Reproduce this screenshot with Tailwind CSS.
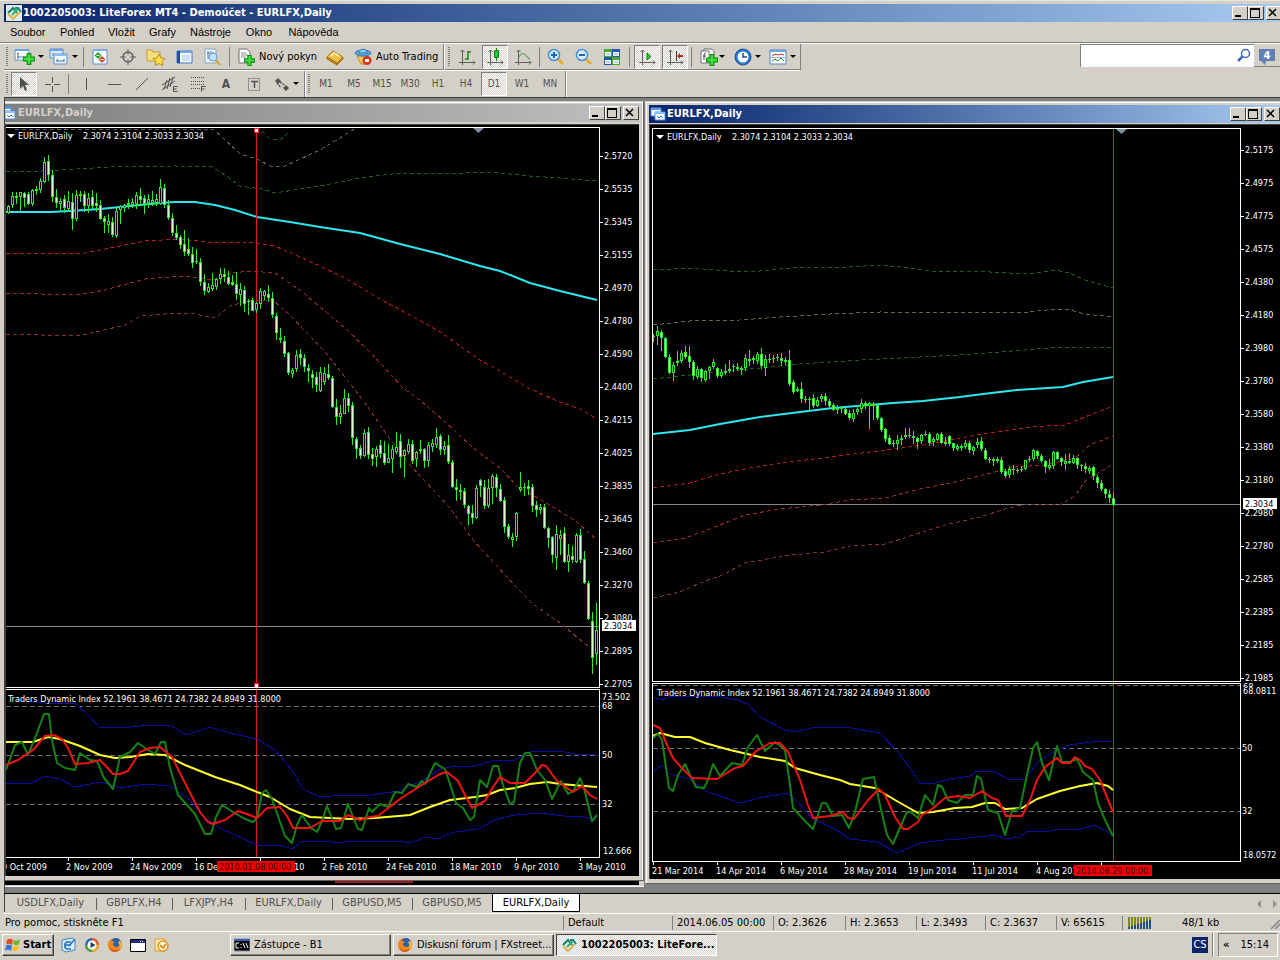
<!DOCTYPE html>
<html lang="cs">
<head>
<meta charset="utf-8">
<title>1002205003: LiteForex MT4 - Demoúčet - EURLFX,Daily</title>
<script src="https://cdn.jsdelivr.net/npm/@tailwindcss/browser@4"></script>
</head>
<body class="h-screen overflow-hidden flex flex-col bg-[#d4d0c8] text-black text-[11px] leading-4 font-['DejaVu_Sans_Condensed','DejaVu_Sans',sans-serif] select-none">

<!-- shared symbols -->
<svg class="hidden" aria-hidden="true">
  <symbol id="logo" viewBox="0 0 16 16"><rect width="16" height="16" fill="#dfeaf0"/><path d="M2 8l5-5 4 5" fill="none" stroke="#14805a" stroke-width="2"/><path d="M9 3h3l3 4" fill="none" stroke="#167f80" stroke-width="2"/><path d="M2 9l5 5 7-7" fill="none" stroke="#e3b445" stroke-width="2"/><path d="M6 10l6-6" stroke="#30b070" stroke-width="2"/></symbol>
  <symbol id="charticon" viewBox="0 0 16 16"><path d="M1 2h10v8H1z" fill="#fff" stroke="#4f8fe0"/><path d="M1 2h10v2H1z" fill="#5b9bef"/><path d="M5 6h10v8H5z" fill="#fff" stroke="#4f8fe0"/><path d="M5 6h10v2H5z" fill="#8cc0ff"/><path d="M7 10l2 2 2-2 2 2" fill="none" stroke="#3474c8"/></symbol>
  <symbol id="min" viewBox="0 0 12 10"><path d="M2 7h6v2H2z"/></symbol>
  <symbol id="max" viewBox="0 0 12 10"><path d="M1 0h10v10H1zM2 2v7h8V2z" fill-rule="evenodd"/></symbol>
  <symbol id="close" viewBox="0 0 12 10"><path d="M2 1l7 7M9 1l-7 7" stroke="#000" stroke-width="1.500"/></symbol>
  <symbol id="arrow" viewBox="0 0 6 4"><path d="M0 0h6L3 3z"/></symbol>
  <symbol id="axes" viewBox="0 0 18 18"><path d="M4.500 2v15M1 14.500h16M2.500 4l2-2 2 2M15 12.500l2 2-2 2" fill="none" stroke="#606060"/></symbol>
  <symbol id="plus" viewBox="0 0 10 10"><path d="M3 0h4v3h3v4H7v3H3V7H0V3h3z" fill="#109410"/><path d="M4 1h2v3h3v2H6v3H4V6H1V4h3z" fill="#3fe03f"/></symbol>
  <symbol id="firefox" viewBox="0 0 16 16"><circle cx="8" cy="8" r="7" fill="#e8781c"/><circle cx="9" cy="6" r="5" fill="#2b62b0"/><path d="M1 6c1-1 2-3 3-4 0 2 2 2 4 3-2 1-3 2-1 4 2 2 5 1 6-2 0 5-3 8-6 8S1 12 1 6z" fill="#f08a1e"/><path d="M13 4c2 3 2 7-1 9 1-3 1-6-1-8z" fill="#fbc531"/><path d="M2 9c2 5 8 6 11 2-1 4-9 6-11-2z" fill="#c8401a"/></symbol>
</svg>

<!-- title bar -->
<header class="shrink-0 border-t border-[#e8e5df] pt-[3px] pl-1">
  <div class="flex items-center h-[18px] pl-0.5 bg-linear-to-r from-[#0a246a] to-[#a6caf0] text-white font-bold">
    <svg class="w-4 h-4 shrink-0"><use href="#logo"/></svg>
    <h1 class="ml-px grow whitespace-nowrap">1002205003: LiteForex MT4 - Demoúčet - EURLFX,Daily</h1>
    <div class="flex shrink-0 -mr-0.5">
      <button aria-label="Minimalizovat" class="w-4 h-[14px] bg-[#d4d0c8] border border-t-white border-l-white border-r-[#404040] border-b-[#404040]"><svg class="w-3 h-[10px]"><use href="#min"/></svg></button>
      <button aria-label="Maximalizovat" class="w-4 h-[14px] bg-[#d4d0c8] border border-t-white border-l-white border-r-[#404040] border-b-[#404040]"><svg class="w-3 h-[10px]"><use href="#max"/></svg></button>
      <button aria-label="Zavřít" class="ml-0.5 w-4 h-[14px] bg-[#d4d0c8] border border-t-white border-l-white border-r-[#404040] border-b-[#404040]"><svg class="w-3 h-[10px]"><use href="#close"/></svg></button>
    </div>
  </div>
</header>

<!-- menu -->
<nav class="shrink-0 flex items-center gap-[15px] h-[21px] pl-[10px] border-b border-[#808080] font-['Liberation_Sans','DejaVu_Sans',sans-serif]">
  <button class="w-[35px]">Soubor</button><button class="w-[33px]">Pohled</button><button class="w-[26px]">Vložit</button><button class="w-[26px]">Grafy</button><button class="w-[40px]">Nástroje</button><button class="w-[28px]">Okno</button><button class="w-[51px]">Nápověda</button>
</nav>

<div class="shrink-0 flex justify-between border-t border-white h-[54px] pl-1">
 <div>
  <!-- standard toolbar -->
  <div class="flex items-center h-[27px] border-b border-white shadow-[0_-1px_0_#808080_inset] border-r border-r-[#808080] w-[797px]">
    <span class="w-[6px] h-5 shrink-0 bg-[repeating-linear-gradient(#808080_0_1px,#d4d0c8_1px_2px)] border-x-2 border-[#d4d0c8]"></span>
    <button aria-label="Nový graf" class="w-9 shrink-0 flex items-center gap-0.5 pl-1"><svg class="w-[22px] h-[18px]" viewBox="0 0 22 18"><path d="M1 2h14v10H1z" fill="#fff" stroke="#5b8fd0"/><path d="M1 1h14v2H1z" fill="#6aa4e8"/><path d="M4 5v6M3 9h9M3 6l1-1 1 1" fill="none" stroke="#507090"/><use href="#plus" x="9" y="5" width="12" height="12"/></svg><svg class="w-[6px] h-1 shrink-0"><use href="#arrow"/></svg></button>
    <button aria-label="Profily" class="w-9 shrink-0 flex items-center gap-0.5 pl-0.5"><svg class="w-[22px] h-[18px]" viewBox="0 0 22 18"><path d="M2 1h13v9H2z" fill="#dcebfb" stroke="#5b8fd0"/><path d="M2 1h13v2H2z" fill="#6aa4e8"/><path d="M5 5v3" stroke="#507090"/><path d="M6 6h13v10H6z" fill="#eef6ff" stroke="#5b8fd0"/><path d="M6 6h13v2H6z" fill="#8cbcf4"/><path d="M9 13h7M9 11v3M16 11v3" stroke="#507090"/></svg><svg class="w-[6px] h-1 shrink-0"><use href="#arrow"/></svg></button>
    <span class="mx-px w-0.5 h-5 border-l border-[#808080] shrink-0"></span>
    <button aria-label="Přehled trhu" class="w-7 shrink-0 flex justify-center"><svg class="w-[18px] h-[18px]" viewBox="0 0 18 18"><path d="M2 2h14v14H2z" fill="#fff" stroke="#5590d0"/><path d="M2 1h14v2H2z" fill="#77b0ec"/><path d="M7 4l3.500 3.500L7 11 3.500 7.500z" fill="#22a522"/><path d="M11 8l3.500 3.500L11 15l-3.500-3.500z" fill="#e2442c"/><path d="M5.500 7.500h3M9.500 11.500h3" stroke="#fff"/></svg></button>
    <button aria-label="Datové okno" class="w-7 shrink-0 flex justify-center"><svg class="w-[18px] h-[18px]" viewBox="0 0 18 18"><circle cx="9" cy="9" r="5" fill="none" stroke="#606060" stroke-width="1.500"/><path d="M9 1v6M9 11v6M1 9h6M11 9h6" stroke="#606060"/></svg></button>
    <button aria-label="Navigátor" class="w-7 shrink-0 flex justify-center"><svg class="w-[20px] h-[18px]" viewBox="0 0 20 18"><path d="M1 2h5l1 2h7v9H1z" fill="#f6df83" stroke="#c49a2a"/><path d="M13 6l2 4 4 .5-3 3 .8 4L13 15.500l-4 2 1-4-3-3 4-.5z" fill="#ffe14a" stroke="#bb8a1d"/></svg></button>
    <button aria-label="Terminál" class="w-7 shrink-0 flex justify-center"><svg class="w-[18px] h-[18px]" viewBox="0 0 18 18"><path d="M2 3h15v12H2z" fill="#f4f9ff" stroke="#3e7ac6"/><path d="M2 3h3v12H2z" fill="#1e4e9c"/><path d="M5 3h12v2H5z" fill="#6ca6ea"/><path d="M7 8h8M7 10h8M7 12h8" stroke="#a8c6e8"/></svg></button>
    <button aria-label="Tester strategií" class="w-7 shrink-0 flex justify-center"><svg class="w-[18px] h-[18px]" viewBox="0 0 18 18"><path d="M2 1h11v14H2z" fill="#eef5fc" stroke="#8ba5c2"/><path d="M5 3v8M4 5h3M8 3v5M10 4v5" stroke="#5c7890"/><circle cx="10" cy="9" r="4" fill="#c5e4fb" stroke="#5b9bd8"/><path d="M13 12l4 5" stroke="#d9a12c" stroke-width="2"/></svg></button>
    <span class="mx-[3px] w-0.5 h-5 border-l border-[#808080] shrink-0"></span>
    <button class="w-[87px] shrink-0 flex items-center gap-1 pl-[3px] whitespace-nowrap"><svg class="w-[18px] h-[18px] shrink-0" viewBox="0 0 18 18"><path d="M2 1h8l3 3v11H2z" fill="#fff" stroke="#707070"/><path d="M4 5h5M4 7h7M4 9h5" stroke="#909090"/><use href="#plus" x="7" y="7" width="11" height="11"/></svg>Nový pokyn</button>
    <button aria-label="MetaEditor" class="w-7 shrink-0 flex justify-center"><svg class="w-[18px] h-[18px]" viewBox="0 0 18 18"><path d="M1 9l6-6 10 6-6 6z" fill="#f0c04a" stroke="#a87412"/><path d="M1 9v2l10 6v-2zM11 15l6-6v2l-6 6z" fill="#c58b22" stroke="#a87412"/><path d="M5 8l3-3 5 3" fill="none" stroke="#ffe9a0" stroke-width="2"/></svg></button>
    <button class="w-[94px] shrink-0 flex items-center gap-1 pl-[5px] whitespace-nowrap"><svg class="w-[18px] h-[18px] shrink-0" viewBox="0 0 18 18"><path d="M3 8h11l-2 8H7z" fill="#f3c85c" stroke="#b98a24"/><ellipse cx="9" cy="5" rx="8" ry="3" fill="#5aa6dc" stroke="#2d78b4"/><path d="M5 5c0-5 8-5 8 0z" fill="#8fcdf2" stroke="#2d78b4"/><circle cx="13" cy="12.500" r="4.500" fill="#dc3318"/><path d="M11 11h4v3h-4z" fill="#fff"/></svg>Auto Trading</button>
    <span class="h-[26px] w-0.5 bg-white border-l border-[#808080] shrink-0"></span>
    <span class="mx-px w-[6px] h-5 shrink-0 bg-[repeating-linear-gradient(#808080_0_1px,#d4d0c8_1px_2px)] border-x-2 border-[#d4d0c8]"></span>
    <button aria-label="Sloupcový graf" class="w-7 shrink-0 flex justify-center"><svg class="w-[18px] h-[18px]" viewBox="0 0 18 18"><use href="#axes"/><path d="M10 3v9M10 4h3M7 11h3" stroke="#188a18" stroke-width="1.500"/></svg></button>
    <button aria-label="Svíčkový graf" class="w-[26px] h-6 mx-px shrink-0 flex items-center justify-center border border-t-[#808080] border-l-[#808080] border-r-white border-b-white bg-[repeating-conic-gradient(#fff_0_25%,#d4d0c8_0_50%)] bg-[length:2px_2px]"><svg class="w-[18px] h-[18px]" viewBox="0 0 18 18"><use href="#axes"/><path d="M10.500 0v13" stroke="#108010"/><path d="M8.500 2.500h4v7h-4z" fill="#28c83c" stroke="#108010"/></svg></button>
    <button aria-label="Čárový graf" class="w-7 shrink-0 flex justify-center"><svg class="w-[18px] h-[18px]" viewBox="0 0 18 18"><use href="#axes"/><path d="M4 11c3-7 6-7 9-2l3 2" fill="none" stroke="#309030"/></svg></button>
    <span class="mx-[2px] w-px h-5 bg-[#808080] shrink-0"></span>
    <button aria-label="Přiblížit" class="w-7 shrink-0 flex justify-center"><svg class="w-[18px] h-[18px]" viewBox="0 0 18 18"><path d="M11 11l5 5" stroke="#e0b030" stroke-width="3"/><circle cx="7" cy="7" r="5.500" fill="#d5edfc" stroke="#4a90d0" stroke-width="1.500"/><path d="M4 7h6M7 4v6" stroke="#1c62b8" stroke-width="2"/></svg></button>
    <button aria-label="Oddálit" class="w-7 shrink-0 flex justify-center"><svg class="w-[18px] h-[18px]" viewBox="0 0 18 18"><path d="M11 11l5 5" stroke="#e0b030" stroke-width="3"/><circle cx="7" cy="7" r="5.500" fill="#d5edfc" stroke="#4a90d0" stroke-width="1.500"/><path d="M4 7h6" stroke="#1c62b8" stroke-width="2"/></svg></button>
    <button aria-label="Dlaždice" class="w-7 shrink-0 flex justify-center"><svg class="w-[18px] h-[18px]" viewBox="0 0 18 18"><path d="M1 1h8v8H1zM9 9h8v8H9z" fill="#48a830"/><path d="M9 1h8v8H9zM1 9h8v8H1z" fill="#2857b0"/><path d="M2 4h6v4H2zM10 4h6v4h-6zM2 12h6v4H2zM10 12h6v4h-6z" fill="#e8f3ff"/><path d="M3 6h4M11 6h4M3 14h4M11 14h4" stroke="#9ab8dc"/></svg></button>
    <span class="mx-[3px] w-px h-5 bg-[#808080] shrink-0"></span>
    <button aria-label="Automatický posun" class="w-[26px] h-6 mx-px shrink-0 flex items-center justify-center border border-t-[#808080] border-l-[#808080] border-r-white border-b-white bg-[repeating-conic-gradient(#fff_0_25%,#d4d0c8_0_50%)] bg-[length:2px_2px]"><svg class="w-[18px] h-[18px]" viewBox="0 0 18 18"><use href="#axes"/><path d="M9 5v7l4-3.500z" fill="#36c836" stroke="#108010"/></svg></button>
    <button aria-label="Posun grafu" class="w-[26px] h-6 mx-px shrink-0 flex items-center justify-center border border-t-[#808080] border-l-[#808080] border-r-white border-b-white bg-[repeating-conic-gradient(#fff_0_25%,#d4d0c8_0_50%)] bg-[length:2px_2px]"><svg class="w-[18px] h-[18px]" viewBox="0 0 18 18"><use href="#axes"/><path d="M10.500 3v10" stroke="#404040"/><path d="M11 8l3-3v2h3v2h-3v2z" fill="#b03020"/></svg></button>
    <span class="mx-[2px] w-px h-5 bg-[#808080] shrink-0"></span>
    <button aria-label="Indikátory" class="w-[35px] shrink-0 flex items-center gap-px pl-[6px]"><svg class="w-[18px] h-[18px] shrink-0" viewBox="0 0 18 18"><path d="M4 1h8l2 2v9H4z" fill="#fff" stroke="#707070"/><path d="M1 3h8v12H1z" fill="#fff" stroke="#707070"/><path d="M6 5c-2 0-2 1-2 7M3 8h3" fill="none" stroke="#404040"/><use href="#plus" x="6" y="6" width="12" height="12"/></svg><svg class="w-[6px] h-1 shrink-0"><use href="#arrow"/></svg></button>
    <button aria-label="Časové rámce" class="w-[35px] shrink-0 flex items-center gap-[3px] pl-[5px]"><svg class="w-[18px] h-[18px] shrink-0" viewBox="0 0 18 18"><circle cx="9" cy="9" r="8" fill="#2d79cc" stroke="#1b4f96"/><circle cx="9" cy="9" r="5.500" fill="#f4faff"/><path d="M9 5v4h4" fill="none" stroke="#2a4d80" stroke-width="1.500"/></svg><svg class="w-[6px] h-1 shrink-0"><use href="#arrow"/></svg></button>
    <button aria-label="Šablony" class="w-[34px] shrink-0 flex items-center gap-[3px] pl-[5px]"><svg class="w-[18px] h-[18px] shrink-0" viewBox="0 0 18 18"><path d="M1 2h16v14H1z" fill="#fff" stroke="#4a86cc"/><path d="M1 2h16v2H1z" fill="#6aa4e8"/><path d="M3 8l3-2 3 1 3-1 3 1" fill="none" stroke="#b03030"/><path d="M3 13l3-2 3 2 3-3 3 3" fill="none" stroke="#208030"/><path d="M1 9.500h16" stroke="#90b4dc"/></svg><svg class="w-[6px] h-1 shrink-0"><use href="#arrow"/></svg></button>
  </div>

  <!-- drawing and period toolbar -->
  <div class="flex items-center h-[26px] w-[563px] border-r border-white shadow-[-1px_0_0_#808080_inset] text-[#505050]">
    <span class="w-[6px] h-5 shrink-0 bg-[repeating-linear-gradient(#808080_0_1px,#d4d0c8_1px_2px)] border-x-2 border-[#d4d0c8]"></span>
    <button aria-label="Kurzor" class="w-[26px] h-6 mx-px shrink-0 flex items-center justify-center border border-t-[#808080] border-l-[#808080] border-r-white border-b-white bg-[repeating-conic-gradient(#fff_0_25%,#d4d0c8_0_50%)] bg-[length:2px_2px]"><svg class="w-[18px] h-[18px]" viewBox="0 0 18 18"><path d="M5 2v12l3-3 2 5 2-1-2-5h4z" fill="#505050"/></svg></button>
    <button aria-label="Zaměřovač" class="w-7 shrink-0 flex justify-center"><svg class="w-[18px] h-[18px]" viewBox="0 0 18 18"><path d="M9.500 2v6M9.500 11v6M2 9.500h6M11 9.500h6" stroke="#505050"/></svg></button>
    <span class="mx-[2px] w-0.5 h-5 border-l border-[#808080] shrink-0"></span>
    <button aria-label="Svislá čára" class="w-7 shrink-0 flex justify-center"><svg class="w-[18px] h-[18px]" viewBox="0 0 18 18"><path d="M9.500 3v12" stroke="#505050"/></svg></button>
    <button aria-label="Vodorovná čára" class="w-7 shrink-0 flex justify-center"><svg class="w-[18px] h-[18px]" viewBox="0 0 18 18"><path d="M3 9.500h13" stroke="#505050"/></svg></button>
    <button aria-label="Trendová čára" class="w-7 shrink-0 flex justify-center"><svg class="w-[18px] h-[18px]" viewBox="0 0 18 18"><path d="M3 15L15 3" stroke="#505050"/></svg></button>
    <button aria-label="Kanál" class="w-7 shrink-0 flex justify-center"><svg class="w-[18px] h-[18px]" viewBox="0 0 18 18"><path d="M1 10L14 2M1 15L14 6M3 14L6 5M6 14l3-11M9 12l3-10" stroke="#505050"/><path d="M16.500 11.500h-4v5h4M12.500 14h3" fill="none" stroke="#505050"/></svg></button>
    <button aria-label="Fibonacci" class="w-7 shrink-0 flex justify-center"><svg class="w-[18px] h-[18px]" viewBox="0 0 18 18"><path d="M2 2.500h14M2 6.500h14M2 9.500h14M2 13.500h9" stroke="#505050" stroke-dasharray="1 1"/><path d="M16.500 11.500h-4v5M12.500 14h3" fill="none" stroke="#505050"/></svg></button>
    <button aria-label="Text" class="w-7 shrink-0 text-center text-[12px] font-bold">A</button>
    <button aria-label="Textový štítek" class="w-7 shrink-0 flex justify-center"><svg class="w-[18px] h-[18px]" viewBox="0 0 18 18"><path d="M3.500 3.500h11v12h-11z" fill="none" stroke="#505050" stroke-dasharray="1 1"/><path d="M6 6.500h7M9.500 6v7" stroke="#505050" stroke-width="1.500"/></svg></button>
    <button aria-label="Šipky" class="w-9 shrink-0 flex items-center gap-0.5 pl-[5px]"><svg class="w-[18px] h-[18px] shrink-0" viewBox="0 0 18 18"><path d="M2 6l3-3 3 3-3 3zM10 13l3-3 3 3-3 3z" fill="#505050"/><path d="M4 8l4 5M7 7l5 3" stroke="#505050" stroke-width="1.500" stroke-dasharray="2 1"/></svg><svg class="w-[6px] h-1 shrink-0"><use href="#arrow"/></svg></button>
    <span class="h-[26px] w-0.5 bg-white border-l border-[#808080] shrink-0"></span>
    <span class="w-[6px] h-5 shrink-0 bg-[repeating-linear-gradient(#808080_0_1px,#d4d0c8_1px_2px)] border-x-2 border-[#d4d0c8]"></span>
    <div class="flex items-center text-[10px]">
      <button class="w-7">M1</button><button class="w-7">M5</button><button class="w-7">M15</button><button class="w-7">M30</button><button class="w-7">H1</button><button class="w-7">H4</button>
      <button class="w-[26px] h-6 mx-px border border-t-[#808080] border-l-[#808080] border-r-white border-b-white bg-[repeating-conic-gradient(#fff_0_25%,#d4d0c8_0_50%)] bg-[length:2px_2px]">D1</button>
      <button class="w-7">W1</button><button class="w-7">MN</button>
    </div>
  </div>
 </div>
 <!-- search -->
 <div class="flex items-start">
   <label class="flex items-center bg-white border-t border-l border-[#808080] h-[23px] w-[174px]">
     <input type="text" aria-label="Hledat" class="w-[155px] h-5 outline-none px-1">
     <svg class="w-4 h-4" viewBox="0 0 16 16"><circle cx="9.500" cy="5.500" r="4" fill="#fff" stroke="#3f66b8" stroke-width="1.500"/><path d="M6.500 8.500L2 13" stroke="#3f66b8" stroke-width="2.500"/></svg>
   </label>
   <button aria-label="Zprávy: 4" class="w-[26px] h-[22px] mt-px flex items-center justify-center border-b border-[#808080]"><svg class="w-[18px] h-[18px]" viewBox="0 0 18 18"><path d="M1 2h16v12H8l-1 4-4-4H1z" fill="#6080b4"/><text x="9" y="12" text-anchor="middle" fill="#fff" class="text-[11px] font-bold">4</text></svg></button>
 </div>
</div>

<!-- document area -->
<main class="relative grow min-h-0 ml-1 border-t border-l border-[#404040] bg-[#808080] overflow-hidden">
  <!-- window behind -->
  <div class="absolute left-0 top-[3px] bottom-1 w-[639px] bg-[#d4d0c8] border-b-2 border-[#808080] shadow-[0_-1px_0_#fff_inset]">
    <div class="absolute bottom-0.5 left-0 w-[634px] h-2 bg-black"></div>
    <div class="absolute bottom-1 left-[330px] w-[78px] h-0.5 bg-[#a01818]"></div>
  </div>
  <!-- left chart window -->
  <section aria-label="EURLFX,Daily 2010" class="absolute left-0 top-[3px] bottom-3 w-[639px] flex flex-col bg-[#d4d0c8] border-t border-t-[#d4d0c8] border-r border-r-[#606060] border-b border-b-[#606060] shadow-[0_1px_0_#fff_inset,-1px_0_0_#f4f2ee_inset]">
    <div class="mt-0.5 mr-1 h-[18px] shrink-0 flex items-center bg-linear-to-r from-[#808080] to-[#c0c0c0] text-[#d4d0c8] font-bold">
      <span class="w-[11px] h-4 overflow-hidden flex justify-end"><svg class="w-4 h-4 shrink-0"><use href="#charticon"/></svg></span>
      <h2 class="ml-0.5 grow">EURLFX,Daily</h2>
      <button aria-label="Minimalizovat" class="w-4 h-[14px] bg-[#d4d0c8] border border-t-white border-l-white border-r-[#404040] border-b-[#404040]"><svg class="w-3 h-[10px]"><use href="#min"/></svg></button>
      <button aria-label="Maximalizovat" class="w-4 h-[14px] bg-[#d4d0c8] border border-t-white border-l-white border-r-[#404040] border-b-[#404040]"><svg class="w-3 h-[10px]"><use href="#max"/></svg></button>
      <button aria-label="Zavřít" class="ml-0.5 w-4 h-[14px] bg-[#d4d0c8] border border-t-white border-l-white border-r-[#404040] border-b-[#404040]"><svg class="w-3 h-[10px]"><use href="#close"/></svg></button>
    </div>
    <div class="mt-0.5 mr-1 mb-1 grow min-h-0 bg-black border-t border-l border-[#404040]">
      <svg class="block w-full h-full text-[9px]"><g id="chartA" transform="translate(-6 -125)"></g></svg>
    </div>
  </section>
  <!-- right chart window -->
  <section aria-label="EURLFX,Daily 2014" class="absolute left-[640px] right-0 top-[3px] bottom-[9px] flex flex-col bg-[#d4d0c8] border-l border-t border-[#d4d0c8] border-b border-b-[#606060] shadow-[1px_1px_0_#fff_inset]">
    <div class="mt-[3px] ml-[3px] h-[18px] shrink-0 flex items-center bg-linear-to-r from-[#0a246a] to-[#a6caf0] text-white font-bold">
      <svg class="w-4 h-4 shrink-0 ml-px"><use href="#charticon"/></svg>
      <h2 class="ml-px grow">EURLFX,Daily</h2>
      <button aria-label="Minimalizovat" class="w-4 h-[14px] bg-[#d4d0c8] border border-t-white border-l-white border-r-[#404040] border-b-[#404040]"><svg class="w-3 h-[10px]"><use href="#min"/></svg></button>
      <button aria-label="Maximalizovat" class="w-4 h-[14px] bg-[#d4d0c8] border border-t-white border-l-white border-r-[#404040] border-b-[#404040]"><svg class="w-3 h-[10px]"><use href="#max"/></svg></button>
      <button aria-label="Zavřít" class="ml-0.5 w-4 h-[14px] bg-[#d4d0c8] border border-t-white border-l-white border-r-[#404040] border-b-[#404040]"><svg class="w-3 h-[10px]"><use href="#close"/></svg></button>
    </div>
    <div class="mt-px ml-[3px] mb-1 grow min-h-0 bg-black border-t border-l border-[#404040]">
      <svg class="block w-full h-full text-[9px]"><g id="chartB" transform="translate(-650 -125)"></g></svg>
    </div>
  </section>
</main>

<!-- chart tabs -->
<nav class="shrink-0 ml-1 h-[21px] border-t border-black border-b border-b-white flex items-start text-[#505050]">
  <button class="h-[18px] w-[92px] border-l border-[#404040]">USDLFX,Daily</button>
  <button class="h-[18px] w-[76px] relative before:absolute before:left-0 before:top-1 before:h-3 before:w-px before:bg-[#606060]">GBPLFX,H4</button>
  <button class="h-[18px] w-[73px] relative before:absolute before:left-0 before:top-1 before:h-3 before:w-px before:bg-[#606060]">LFXJPY,H4</button>
  <button class="h-[18px] w-[87px] relative before:absolute before:left-0 before:top-1 before:h-3 before:w-px before:bg-[#606060]">EURLFX,Daily</button>
  <button class="h-[18px] w-20 relative before:absolute before:left-0 before:top-1 before:h-3 before:w-px before:bg-[#606060]">GBPUSD,M5</button>
  <button class="h-[18px] w-20 relative before:absolute before:left-0 before:top-1 before:h-3 before:w-px before:bg-[#606060]">GBPUSD,M5</button>
  <button class="h-[18px] w-[88px] bg-white border-x border-b border-black text-black">EURLFX,Daily</button>
  <span class="grow"></span>
  <svg class="w-6 h-4 mt-0.5" viewBox="0 0 24 16"><path d="M5 4v8L1 8zM17 4v8l4-4z" fill="#909090"/></svg>
</nav>

<!-- status bar -->
<footer class="shrink-0 flex items-center h-[18px] pl-[5px] border-b border-white">
  <p class="w-[558px]">Pro pomoc, stiskněte F1</p>
  <p class="w-[109px] border-l border-[#808080] pl-1 leading-[14px]">Default</p>
  <p class="w-[101px] border-l border-[#808080] pl-1 leading-[14px]">2014.06.05 00:00</p>
  <p class="w-[72px] border-l border-[#808080] pl-1 leading-[14px]">O: 2.3626</p>
  <p class="w-[71px] border-l border-[#808080] pl-1 leading-[14px]">H: 2.3653</p>
  <p class="w-[69px] border-l border-[#808080] pl-1 leading-[14px]">L: 2.3493</p>
  <p class="w-[71px] border-l border-[#808080] pl-1 leading-[14px]">C: 2.3637</p>
  <p class="w-[66px] border-l border-[#808080] pl-1 leading-[14px]">V: 65615</p>
  <div class="grow border-l border-[#808080] pl-[5px] flex items-center h-[14px]">
    <svg class="w-6 h-3" viewBox="0 0 24 12"><path d="M0 0h2v10H0zM3 0h2v9H3zM6 0h2v8H6zM9 0h2v7H9zM12 0h2v6h-2zM15 0h2v5h-2zM18 0h2v4h-2zM21 0h2v3h-2z" fill="#808a10"/><path d="M0 10h2v2H0zM3 9h2v3H3zM6 8h2v4H6zM9 7h2v5H9zM12 6h2v6h-2zM15 5h2v7h-2zM18 4h2v8h-2zM21 3h2v9h-2z" fill="#205080"/></svg>
    <span class="ml-[30px] grow">48/1 kb</span>
    <svg class="w-3 h-3" viewBox="0 0 12 12"><path d="M3 12l9-9M7 12l5-5" stroke="#808080" stroke-width="1.500"/></svg>
  </div>
</footer>

<!-- taskbar -->
<div class="shrink-0 h-7 flex items-center pl-0.5 pr-0.5 pb-0.5">
  <button class="w-[52px] h-[22px] flex items-center gap-0.5 pl-0.5 font-bold border border-t-white border-l-white border-r-[#404040] border-b-[#404040] shadow-[-1px_-1px_0_#808080_inset]"><svg class="w-4 h-4 shrink-0" viewBox="0 0 16 16"><path d="M2 3c2-2 4-1 6 0L7 8C5 7 3 6 1 8z" fill="#e34b20"/><path d="M9 3c2 1 4 1 6-1l-1 5c-2 2-4 1-6 0z" fill="#70b52c"/><path d="M1 9c2-2 4-1 6 0l-1 5c-2-1-4-2-6 0z" fill="#3a72d8"/><path d="M8 9c2 1 4 1 6-1l-1 5c-2 2-4 1-6 0z" fill="#f6c21c"/></svg>Start</button>
  <div class="flex gap-[7px] ml-[7px]">
    <button aria-label="Outlook Express"><svg class="w-4 h-4" viewBox="0 0 16 16"><path d="M1 3l10-2 3 2v10l-9 2-4-2z" fill="#d8ecfa" stroke="#3a86c4"/><path d="M10 5H6c-3 1-3 6 0 7h4M4 8h6" fill="none" stroke="#2474bc" stroke-width="1.500"/><path d="M14 2l-6 7" stroke="#2474bc" stroke-width="1.500"/></svg></button>
    <button aria-label="Media Player"><svg class="w-4 h-4" viewBox="0 0 16 16"><circle cx="8" cy="8" r="7" fill="#2c62b4"/><path d="M8 1a7 7 0 0 1 7 7H8z" fill="#e8632c"/><path d="M15 8a7 7 0 0 1-7 7V8z" fill="#e9b12c"/><path d="M8 15a7 7 0 0 1-7-7h7z" fill="#57a640"/><circle cx="8" cy="8" r="4.500" fill="#fff"/><path d="M6.500 5v6l5-3z" fill="#283c60"/></svg></button>
    <button aria-label="Firefox"><svg class="w-4 h-4"><use href="#firefox"/></svg></button>
    <button aria-label="Plocha"><svg class="w-4 h-4" viewBox="0 0 16 16"><path d="M.5 2.500h15v12H.5z" fill="#fff" stroke="#000"/><path d="M1 3h14v3H1z" fill="#1c2c80"/><path d="M10 4h1v1h-1zM12 4h1v1h-1z" fill="#fff"/></svg></button>
    <button aria-label="Outlook"><svg class="w-4 h-4" viewBox="0 0 16 16"><path d="M2 2h10v12H2z" fill="#fdeab8" stroke="#d89a28"/><circle cx="10" cy="9" r="5" fill="#fff3d0" stroke="#dc9a24" stroke-width="1.500"/><path d="M7 8l3 3 3-4" fill="none" stroke="#c88418" stroke-width="1.500"/></svg></button>
  </div>
  <div class="flex gap-0.5 ml-[61px]">
    <button class="w-[161px] h-[22px] flex items-center gap-1 pl-[3px] whitespace-nowrap border border-t-white border-l-white border-r-[#404040] border-b-[#404040] shadow-[-1px_-1px_0_#808080_inset]"><svg class="w-4 h-4 shrink-0" viewBox="0 0 16 16"><path d="M0 2h16v12H0z" fill="#000" stroke="#8090b0"/><path d="M0 2h16v2H0z" fill="#3460b0"/><path d="M5 6H2v5h3M7 7v1M7 10v1M9 6l2 5M12 6l2 5" fill="none" stroke="#fff"/></svg>Zástupce - B1</button>
    <button class="w-[161px] h-[22px] flex items-center gap-1 pl-[3px] whitespace-nowrap border border-t-white border-l-white border-r-[#404040] border-b-[#404040] shadow-[-1px_-1px_0_#808080_inset]"><svg class="w-4 h-4 shrink-0"><use href="#firefox"/></svg>Diskusní fórum | FXstreet...</button>
    <button class="w-[161px] h-[22px] flex items-center gap-1 pl-[4px] whitespace-nowrap font-bold border border-t-[#404040] border-l-[#404040] border-r-white border-b-white bg-[repeating-conic-gradient(#fff_0_25%,#d4d0c8_0_50%)] bg-[length:2px_2px]"><svg class="w-4 h-4 shrink-0"><use href="#logo"/></svg>1002205003: LiteFore...</button>
  </div>
  <span class="grow"></span>
  <button class="w-4 h-4 bg-[#0a246a] text-white text-center">CS</button>
  <span class="mx-1 w-0.5 h-6 border-l border-[#808080] bg-white"></span>
  <div class="w-[60px] h-6 flex items-center justify-between pl-1 pr-2 border border-t-[#808080] border-l-[#808080] border-r-white border-b-white"><button class="font-bold">«</button><time>15:14</time></div>
</div>

<script>
// candle rows: high, low, body top, body bottom, direction (1 = up/hollow, 0 = down/filled)
const candlesA = `205,214,206,213,1 192,208,196,205,1 192,204,196,198,0 192,211,192,197,1 192,207,193,198,0 192,205,194,204,0 189,206,190,204,1 186,195,189,191,1 178,193,181,190,1 157,183,162,182,1 155,181,161,175,0 170,202,175,197,0 189,208,197,203,0 198,212,201,204,1 195,213,199,208,0 191,212,201,209,1 193,230,202,219,0 190,221,195,219,1 191,202,194,196,1 191,212,194,206,0 193,213,198,206,1 190,209,197,206,0 193,212,203,206,0 200,220,205,219,0 216,233,218,222,0 214,233,221,225,1 217,237,222,235,0 208,238,211,236,1 205,224,206,210,1 204,212,205,208,1 199,209,203,205,1 198,208,202,205,1 192,209,195,204,1 188,206,196,200,0 195,214,198,204,0 194,208,199,203,1 191,206,200,203,1 194,206,199,203,1 179,205,187,204,1 184,208,188,205,0 200,220,205,218,0 213,236,218,233,0 225,240,233,238,0 235,249,237,245,0 230,256,244,252,0 238,256,249,254,0 247,268,254,263,0 249,264,261,262,1 258,286,262,282,0 274,295,282,291,0 283,293,287,292,1 273,291,285,289,1 278,290,279,287,1 268,284,274,279,1 268,282,274,277,0 271,285,277,284,0 275,286,282,285,0 272,300,284,294,0 283,306,289,295,1 286,312,290,304,0 299,315,301,302,0 298,311,300,311,0 302,313,303,310,1 288,309,291,304,1 290,300,291,296,1 285,302,294,298,0 292,318,298,315,0 313,340,316,333,0 328,343,338,340,0 336,357,341,354,0 352,375,353,373,0 368,378,370,374,1 350,372,355,369,1 349,365,354,358,0 354,372,358,367,0 364,382,368,371,0 370,388,374,378,0 372,392,377,385,0 367,392,372,391,1 367,385,373,382,1 364,380,374,378,0 376,408,378,407,0 399,425,407,417,0 405,424,413,417,1 389,414,398,414,1 393,412,398,406,0 402,445,405,438,0 437,459,439,449,0 445,459,448,456,0 429,457,433,456,1 427,459,432,455,0 448,466,454,459,0 446,467,449,457,1 440,458,445,454,0 441,465,453,463,0 444,463,458,463,1 445,473,449,459,1 432,454,447,452,1 434,468,441,457,0 449,477,450,456,1 439,454,444,452,1 440,464,444,461,0 451,467,452,459,1 440,454,449,451,0 448,468,449,461,0 442,467,445,461,1 439,452,443,447,1 428,448,437,445,1 434,455,436,450,0 441,455,446,450,1 435,464,445,462,0 460,488,462,487,0 479,501,487,490,0 484,500,490,492,0 488,508,491,505,0 505,525,506,514,0 505,524,513,518,0 485,519,488,518,1 479,497,480,486,0 480,509,487,506,0 479,508,488,506,1 474,504,476,488,1 474,497,477,488,0 484,502,489,501,0 497,533,500,527,0 524,539,526,537,0 533,547,537,540,1 512,541,513,537,1 472,492,487,490,1 483,496,487,488,0 480,495,486,489,0 484,512,487,506,0 501,517,505,510,0 504,514,507,510,1 504,529,507,528,0 527,548,528,538,0 536,563,537,555,0 525,570,534,558,1 530,555,535,539,1 527,563,533,562,0 544,572,555,562,1 546,563,556,560,0 533,563,535,562,1 529,563,535,560,0 551,584,559,583,0 581,620,583,619,0 612,674,621,658,0 603,665,630,654,1`;
const candlesB = `334,342,336,337,1 326,345,331,336,1 330,351,332,338,0 337,358,338,357,0 354,374,357,373,0 362,381,365,373,1 351,366,361,363,1 350,363,353,361,1 346,359,352,357,0 346,368,356,362,0 360,380,362,376,0 366,379,369,377,1 368,382,369,378,0 370,382,371,380,1 366,379,367,371,1 359,369,362,367,1 367,378,368,376,0 369,378,372,376,1 364,375,371,373,1 360,373,369,371,1 364,372,366,367,1 363,371,367,369,0 366,375,368,370,0 354,371,358,368,1 350,366,359,361,0 356,364,358,360,0 352,364,354,361,1 348,369,354,366,0 355,376,359,368,1 354,363,359,360,1 355,363,358,359,1 354,361,357,358,1 353,366,358,361,0 357,365,360,362,0 350,386,360,384,0 380,394,382,392,0 387,392,389,391,1 382,403,389,399,0 396,403,399,400,0 397,410,399,400,0 394,408,398,406,0 397,407,400,406,1 394,402,396,399,1 393,405,396,401,0 399,408,401,406,0 403,411,405,410,0 405,414,408,410,0 406,413,408,409,0 408,415,409,414,0 410,420,413,418,0 409,422,413,419,1 405,415,409,412,1 399,413,403,409,1 401,409,403,406,0 402,429,403,406,1 402,420,404,406,0 404,420,405,418,0 417,432,418,430,0 428,442,429,439,0 435,445,438,444,0 440,447,443,444,0 435,450,440,444,1 435,445,438,440,1 428,439,435,437,1 428,438,435,436,1 431,444,436,438,0 437,449,438,442,0 434,444,435,441,1 431,436,434,435,1 432,446,434,443,0 437,446,439,442,1 433,441,434,440,1 432,444,434,443,0 437,446,442,444,1 435,446,436,444,0 443,451,443,448,0 444,451,446,449,1 444,451,446,448,0 440,449,443,447,1 441,453,443,450,0 446,455,447,451,1 438,448,442,445,1 437,451,441,449,0 448,460,450,459,0 457,463,459,460,0 457,466,459,461,0 457,463,459,461,1 457,474,460,472,0 469,478,471,476,0 466,478,469,475,1 465,475,469,470,0 468,473,470,471,1 466,472,469,470,1 460,470,460,469,1 456,462,459,460,1 449,461,450,459,1 450,459,451,456,0 454,463,456,461,0 460,473,461,467,0 459,470,465,468,1 451,469,452,466,1 451,460,452,459,0 457,466,458,462,0 454,470,461,464,1 453,464,461,463,0 455,464,458,463,1 457,469,458,465,0 464,471,465,466,0 463,473,466,469,0 466,474,468,471,1 466,480,467,476,0 475,488,477,483,0 480,491,483,489,0 488,498,489,494,0 490,503,494,498,0 493,506,498,505,0`;

const candles = (rows, x0) => '<g shape-rendering="crispEdges">' + rows.split(' ').map((r, i) => {
  const [h, l, t, b, up] = r.split(',').map(Number), x = x0 + i * 4, bh = Math.max(b - t, 1);
  return `<path fill="#32e632" d="M${x} ${h}h1V${l}h-1zM${x - 1} ${t}h3v${bh}h-3z"/>` +
    (bh > 2 ? `<path fill="${up ? '#000' : '#d4ffd4'}" d="M${x} ${t + 1}h1v${bh - 2}h-1z"/>` : '');
}).join('') + '</g>';
const line = (pts, color, w, dash) => `<polyline points="${pts}" fill="none" stroke="${color}" stroke-width="${w}" ${dash ? `stroke-dasharray="${dash}"` : ''} ${w === 1 ? 'shape-rendering="crispEdges"' : 'stroke-linejoin="round"'}/>`;
const text = (x, y, s, color = '#fff') => `<text x="${x}" y="${y}" fill="${color}">${s}</text>`;
const dashed = (pts, color) => line(pts, color, 1, '4 3');
const box = d => `<path d="${d}" fill="none" stroke="#fff" shape-rendering="crispEdges"/>`;

const G = '#1c6020', O = '#686848', D = '#606060', R = '#b41c1c', R2 = '#9a2828', R3 = '#883030';

document.getElementById('chartA').innerHTML =
  line('6,626.5 599,626.5', '#808890', 1) +
  dashed('15,129 213,129 222,137 240,154 257,159 270,166 285,166 300,159 320,150 340,138 354,129', D) +
  dashed('262,131 270,139 280,140 291,131', G) +
  dashed('6,171 25,172 60,170 110,167 175,166 212,167 225,175 240,186 262,189 275,193 300,189 320,186 345,181 360,178 400,173 440,174 490,172 530,176 560,178 597,181', G) +
  dashed('6,253 85,253 105,249 145,241 180,239 215,243 245,242 275,246 300,257 320,266 345,278 380,299 410,315 440,332 480,360 500,371 530,389 560,402 580,409 597,419', R) +
  dashed('6,293 78,295 105,290 145,279 185,276 212,280 232,273 250,271 275,273 300,290 320,307 345,328 370,352 403,388 421,401 443,420 473,448 500,468 518,487 550,505 577,522 597,540', R2) +
  dashed('6,334 78,336 100,331 125,325 140,316 165,314 190,313 215,318 230,306 250,300 273,300 290,315 325,352 352,386 365,403 392,442 410,465 450,508 473,540 517,588 533,604 560,623 590,648', R3) +
  line('6,212 50,212 70,211 100,209 130,206 160,203 175,202 195,202 215,205 235,210 257,217 290,222 320,227 360,233 400,244 440,254 480,266 500,271 530,283 560,291 597,300', '#2ee6ee', 2) +
  '<path d="M256 128h1v729h-1z" fill="#e01820" shape-rendering="crispEdges"/>' +
  candles(candlesA, 8) +
  [706.5, 755.5, 804.5].map(y => line(`6,${y} 599,${y}`, '#707070', 1, '5 3')).join('') +
  line('18,700 45,703 75,703 88,715 100,728 130,727 150,725 172,726 186,735 210,727 230,733 257,739 275,750 292,770 303,789 320,797 345,795 370,795 400,791 425,779 440,769 455,766 475,766 492,761 515,760 530,752 560,751 575,754 597,754', '#0c0ca0', 1) +
  line('6,783 30,784 45,776 60,779 75,787 100,782 120,788 145,784 170,786 190,800 205,818 222,829 257,845 280,845 292,849 303,841 325,841 335,843 355,841 375,842 400,841 412,843 425,837 437,839 455,832 478,829 497,819 515,815 540,813 565,816 580,816 597,820', '#0c0ca0', 1) +
  line('6,742 33,742 48,737 60,739 80,746 100,755 115,758 130,757 148,754 165,755 185,765 215,777 240,785 257,792 270,797 290,809 310,817 330,818 350,819 375,818 410,815 430,807 450,800 475,797 487,795 500,790 515,788 530,784 547,782 560,784 597,787', '#ffff30', 2) +
  line('6,770 15,745 22,742 28,755 37,733 44,714 49,714 52,740 57,763 65,768 75,770 80,753 90,760 97,761 104,778 113,789 120,757 130,752 138,743 145,748 155,754 161,742 165,742 170,768 178,795 187,805 195,814 205,834 211,834 216,817 222,805 233,812 245,819 253,822 257,818 262,793 266,790 272,799 285,836 292,843 297,825 302,815 311,828 317,832 322,821 327,806 336,829 341,828 348,804 358,829 362,830 369,808 372,812 380,804 388,807 395,792 402,793 408,784 417,787 422,781 425,784 435,763 445,769 452,790 456,803 463,808 470,820 474,817 480,780 487,787 493,766 498,766 503,785 510,804 514,802 520,763 525,753 530,753 537,770 545,780 552,799 561,781 568,794 574,790 580,778 584,788 592,821 597,815', '#148214', 2) +
  line('6,765 18,760 33,750 45,736 54,735 62,739 68,748 75,764 88,763 100,760 106,766 113,774 120,774 128,771 140,752 150,748 160,747 172,757 185,783 200,812 208,822 213,824 225,820 238,811 247,814 257,818 267,808 280,807 287,816 293,828 310,828 322,821 340,821 348,815 360,820 370,817 378,816 400,799 425,783 440,774 447,772 458,781 466,797 472,808 485,801 493,787 500,777 510,783 525,783 535,773 542,765 546,766 557,781 573,792 582,786 590,795 597,799', '#f01414', 2) +
  '<path d="M254 128h5v5h-5zM254 683h5v5h-5z" fill="#e01820"/><path d="M255 129h3v3h-3zM255 684h3v3h-3z" fill="#fff"/>' +
  box('M6 127.5H599.5V687.5H6M6 689.5H599.5V857.5H6') +
  box([...Array(17)].map((_, i) => `M600 ${156.5 + i * 33}h3`).join('') + [...Array(9)].map((_, i) => `M${68.5 + i * 64} 858v3`).join('')) +
  '<path d="M473 128h11l-5.500 5z" fill="#8090a0"/><path d="M7 134h8l-4 4z" fill="#fff"/>' +
  text(18, 139, 'EURLFX,Daily') + text(83, 139, '2.3074 2.3104 2.3033 2.3034') +
  text(8, 702, 'Traders Dynamic Index 52.1961 38.4671 24.7382 24.8949 31.8000') +
  ['2.5720','2.5535','2.5345','2.5155','2.4970','2.4780','2.4590','2.4400','2.4215','2.4025','2.3835','2.3645','2.3460','2.3270','2.3080','2.2895','2.2705'].map((s, i) => text(604, 159 + i * 33, s)).join('') +
  text(602, 700, '73.502') + text(602, 709, '68') + text(602, 758, '50') + text(602, 807, '32') + text(603, 854, '12.666') +
  ['9 Oct 2009','2 Nov 2009','24 Nov 2009','16 Dec 2009','8 Jan 2010','2 Feb 2010','24 Feb 2010','18 Mar 2010','9 Apr 2010','3 May 2010'].map((s, i) => text(2 + i * 64 + (i === 4 ? 3 : 0), 870, s)).join('') +
  '<path d="M602 620h34v11h-34z" fill="#fff"/>' + text(604, 629, '2.3034', '#000') +
  '<path d="M217 861h78v11h-78z" fill="#f00000"/>' + text(219, 870, '2010.01.08 00:00', '#300000');

document.getElementById('chartB').innerHTML =
  line('653,504.5 1241,504.5', '#808890', 1) +
  dashed('653,270 690,268 730,271 760,271 800,267 850,267 880,265 900,267 930,271 960,271 990,272 1030,274 1055,270 1070,273 1085,280 1113,288', G) +
  dashed('653,325 690,321 740,320 780,317 830,314 880,312 950,313 1030,312 1055,309 1070,310 1085,314 1113,317', O) +
  dashed('653,379 690,375 720,372 750,369 800,364 860,360 900,358 960,355 1000,352 1050,348 1075,347 1113,347', G) +
  dashed('653,488 690,483 720,474 750,468 790,462 830,457 870,452 895,449 930,444 960,438 983,434 1030,427 1065,425 1085,417 1113,406', R) +
  dashed('653,543 685,538 710,529 745,515 780,509 820,505 850,500 885,498 920,489 940,485 955,482 983,475 1015,467 1045,465 1075,458 1090,445 1113,436', R2) +
  dashed('653,598 680,592 700,583 720,576 745,563 790,555 825,552 850,546 885,544 910,536 945,525 980,517 1005,509 1025,504 1060,505 1075,496 1085,481 1100,472 1113,464', R3) +
  line('653,434 690,430 720,424 760,417 800,412 833,408 857,406 893,403 923,401 960,397 983,394 1017,390 1063,387 1083,382 1113,377', '#2ee6ee', 2) +
  '<path d="M1113 129h1v732h-1z" fill="#e01820" shape-rendering="crispEdges"/>' +
  candles(candlesB, 653) +
  [685.5, 748.5, 811.5].map(y => line(`653,${y} 1241,${y}`, '#707070', 1, '5 3')).join('') +
  line('653,697 662,700 672,696 715,696 738,700 748,704 760,717 785,730 795,732 815,727 845,727 880,733 900,754 921,784 935,783 950,779 970,776 977,771 993,771 1008,779 1025,779 1038,762 1055,751 1070,745 1090,742 1113,741', '#0c0ca0', 1) +
  line('653,772 662,765 670,774 690,779 705,791 740,803 763,797 787,793 797,801 813,819 835,829 850,839 878,842 897,853 920,843 945,840 960,839 995,835 1006,839 1020,837 1028,831 1045,832 1060,829 1080,829 1094,825 1106,831 1113,836', '#0c0ca0', 1) +
  line('653,736 660,733 675,737 690,737 705,743 730,750 760,757 785,761 795,768 820,775 840,780 850,784 875,788 895,800 918,813 933,812 955,808 972,807 985,803 995,803 1005,809 1022,808 1037,799 1060,791 1080,786 1097,783 1108,786 1113,790', '#ffff30', 2) +
  line('653,738 658,734 662,740 669,788 673,791 678,775 685,764 690,775 696,787 704,788 708,780 713,764 720,776 732,763 742,765 748,747 757,735 765,751 775,742 785,750 790,785 793,808 805,821 813,829 822,803 826,803 833,816 842,815 849,828 855,812 863,779 874,777 880,805 887,835 893,844 899,830 907,812 911,812 918,818 925,795 933,805 938,785 942,787 948,800 957,803 965,795 973,795 977,776 981,779 988,810 998,813 1005,835 1012,811 1020,808 1027,775 1033,748 1037,742 1042,763 1049,780 1057,746 1062,762 1070,762 1077,759 1083,772 1093,780 1098,803 1105,820 1113,836', '#148214', 2) +
  line('653,725 660,728 667,745 673,758 681,767 692,778 717,779 735,768 743,766 755,752 770,743 780,743 788,752 800,780 808,805 813,818 830,816 843,812 848,818 854,819 868,800 879,789 885,795 895,817 903,829 908,829 918,822 922,815 932,809 945,798 958,796 970,798 982,791 992,798 998,800 1006,816 1022,816 1030,800 1037,780 1045,767 1057,758 1062,763 1070,763 1075,757 1080,760 1085,766 1092,769 1100,780 1113,812', '#f01414', 2) +
  box('M652.5 128.5H1240.5V681.5H652.5zM652.5 683.5H1240.5V861.5H652.5z') +
  box([...Array(17)].map((_, i) => `M1241 ${150.5 + i * 33}h3`).join('') + [...Array(8)].map((_, i) => `M${653.5 + i * 64} 862v3`).join('')) +
  '<path d="M1116 129h11l-5.500 5z" fill="#8090a0"/><path d="M656 135h8l-4 4z" fill="#fff"/>' +
  text(667, 140, 'EURLFX,Daily') + text(732, 140, '2.3074 2.3104 2.3033 2.3034') +
  text(657, 696, 'Traders Dynamic Index 52.1961 38.4671 24.7382 24.8949 31.8000') +
  ['2.5175','2.4975','2.4775','2.4575','2.4380','2.4180','2.3980','2.3780','2.3580','2.3380','2.3180','2.2980','2.2780','2.2585','2.2385','2.2185','2.1985'].map((s, i) => text(1245, 153 + i * 33, s)).join('') +
  text(1243, 690, '68') + '<path d="M1243 687h37v8h-37z" fill="#000"/>' + text(1243, 694, '68.0811') + text(1242, 751, '50') + text(1242, 814, '32') + text(1243, 858, '18.0572') +
  ['21 Mar 2014','14 Apr 2014','6 May 2014','28 May 2014','19 Jun 2014','11 Jul 2014','4 Aug 2014','26 Aug 2014'].map((s, i) => text(652 + i * 64, 874, s)).join('') +
  '<path d="M1243 498h34v11h-34z" fill="#fff"/>' + text(1245, 507, '2.3034', '#000') +
  '<path d="M1074 865h78v11h-78z" fill="#f00000"/>' + text(1076, 874, '2014.08.29 00:00', '#300000');
</script>
</body>
</html>
